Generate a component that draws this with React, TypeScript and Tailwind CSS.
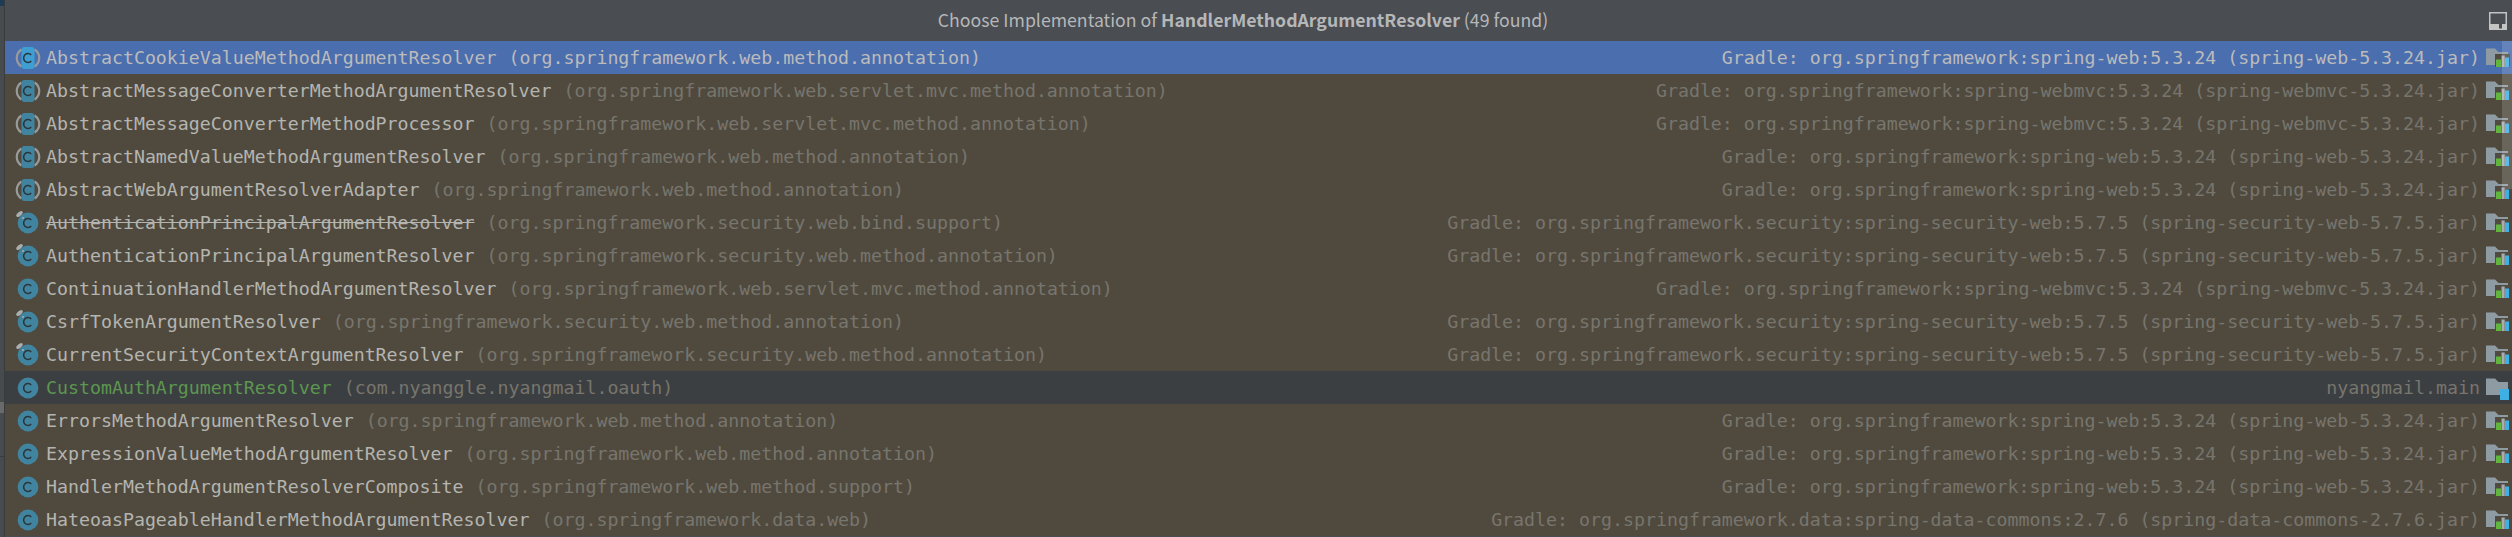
const mono = "font-['DejaVu_Sans_Mono','Liberation_Mono',monospace]";

type Row = {
  name: string;
  pkg: string;
  lib: string;
  kind: "abstract" | "cls" | "lock";
  strike?: boolean;
  selected?: boolean;
  local?: boolean;
};

const web = "Gradle: org.springframework:spring-web:5.3.24 (spring-web-5.3.24.jar)";
const mvc = "Gradle: org.springframework:spring-webmvc:5.3.24 (spring-webmvc-5.3.24.jar)";
const sec = "Gradle: org.springframework.security:spring-security-web:5.7.5 (spring-security-web-5.7.5.jar)";
const data = "Gradle: org.springframework.data:spring-data-commons:2.7.6 (spring-data-commons-2.7.6.jar)";

const rows: Row[] = [
  { name: "AbstractCookieValueMethodArgumentResolver", pkg: "(org.springframework.web.method.annotation)", lib: web, kind: "abstract", selected: true },
  { name: "AbstractMessageConverterMethodArgumentResolver", pkg: "(org.springframework.web.servlet.mvc.method.annotation)", lib: mvc, kind: "abstract" },
  { name: "AbstractMessageConverterMethodProcessor", pkg: "(org.springframework.web.servlet.mvc.method.annotation)", lib: mvc, kind: "abstract" },
  { name: "AbstractNamedValueMethodArgumentResolver", pkg: "(org.springframework.web.method.annotation)", lib: web, kind: "abstract" },
  { name: "AbstractWebArgumentResolverAdapter", pkg: "(org.springframework.web.method.annotation)", lib: web, kind: "abstract" },
  { name: "AuthenticationPrincipalArgumentResolver", pkg: "(org.springframework.security.web.bind.support)", lib: sec, kind: "lock", strike: true },
  { name: "AuthenticationPrincipalArgumentResolver", pkg: "(org.springframework.security.web.method.annotation)", lib: sec, kind: "lock" },
  { name: "ContinuationHandlerMethodArgumentResolver", pkg: "(org.springframework.web.servlet.mvc.method.annotation)", lib: mvc, kind: "cls" },
  { name: "CsrfTokenArgumentResolver", pkg: "(org.springframework.security.web.method.annotation)", lib: sec, kind: "lock" },
  { name: "CurrentSecurityContextArgumentResolver", pkg: "(org.springframework.security.web.method.annotation)", lib: sec, kind: "lock" },
  { name: "CustomAuthArgumentResolver", pkg: "(com.nyanggle.nyangmail.oauth)", lib: "nyangmail.main", kind: "cls", local: true },
  { name: "ErrorsMethodArgumentResolver", pkg: "(org.springframework.web.method.annotation)", lib: web, kind: "cls" },
  { name: "ExpressionValueMethodArgumentResolver", pkg: "(org.springframework.web.method.annotation)", lib: web, kind: "cls" },
  { name: "HandlerMethodArgumentResolverComposite", pkg: "(org.springframework.web.method.support)", lib: web, kind: "cls" },
  { name: "HateoasPageableHandlerMethodArgumentResolver", pkg: "(org.springframework.data.web)", lib: data, kind: "cls" },
];

function ClassIcon({ kind, selected }: { kind: Row["kind"]; selected?: boolean }) {
  const fill = selected ? "#3f9fd2" : "#41849f";
  return (
    <svg width="22" height="24" viewBox="0 0 22 24" className="shrink-0 overflow-visible">
      {kind === "abstract" ? (
        <>
          <path d="M4.5 3.5 A10 10 0 0 0 4.5 20.5" fill="none" stroke="#9a9a9a" strokeWidth="2.2" />
          <path d="M17.5 3.5 A10 10 0 0 1 17.5 20.5" fill="none" stroke="#9a9a9a" strokeWidth="2.2" />
          <rect x="4.5" y="1" width="13" height="22" rx="3" fill={fill} />
        </>
      ) : (
        <circle cx="11" cy="12" r="10.4" fill={fill} />
      )}
      <path d="M14.2 9 A4.3 4.6 0 1 0 14.2 15" fill="none" stroke="#2a3439" strokeWidth="1.5" />
      {kind === "lock" && (
        <>
          <ellipse cx="2.5" cy="3" rx="3.8" ry="2" transform="rotate(-40 2.5 3)" fill="#a9aeb0" />
          <circle cx="6" cy="7" r="1" fill="#a9aeb0" />
        </>
      )}
    </svg>
  );
}

function FolderIcon({ local }: { local?: boolean }) {
  return (
    <svg width="24" height="24" viewBox="0 0 24 24" className="shrink-0">
      <path d="M0 2.5 H9 L12.5 6 H22 V19 H0 Z" fill="#8f9ba3" />
      {local ? (
        <rect x="14" y="13" width="9" height="11" fill="#3fb0e4" />
      ) : (
        <>
          <rect x="9" y="8" width="15" height="13" fill="#4f4b41" />
          <rect x="10" y="13.5" width="5" height="7.5" fill="#62b53d" />
          <rect x="15.5" y="9.5" width="3.2" height="11.5" fill="#a8adb0" />
          <rect x="19" y="11.5" width="4" height="9.5" fill="#3fb0e4" />
        </>
      )}
    </svg>
  );
}

function ResultRow({ row }: { row: Row }) {
  const bg = row.selected ? "bg-[#4b6eaf]" : row.local ? "bg-[#3c3f41]" : "bg-[#504a3e]";
  const nameColor = row.selected ? "text-[#bbbbbb]" : row.local ? "text-[#5c9650]" : "text-[#b4b4b0]";
  const dim = row.selected ? "text-[#bbbbbb]" : "text-[#77756d]";
  return (
    <div className={`${bg} h-[33px] flex items-center pl-[12px] pr-[2px] shrink-0 whitespace-pre`}>
      <ClassIcon kind={row.kind} selected={row.selected} />
      <span className={`ml-[7px] ${nameColor} ${row.strike ? "line-through" : ""}`}>{row.name}</span>
      <span className={`ml-[12px] ${dim}`}>{row.pkg}</span>
      <span className={`ml-auto mr-[6px] ${dim}`}>{row.lib}</span>
      <FolderIcon local={row.local} />
    </div>
  );
}

export default function App() {
  return (
    <div className="w-[2512px] h-[537px] overflow-hidden flex bg-[#4a4d52]">
      <div className="w-[5px] shrink-0 bg-[#484b4e] border-r border-[#393c3f] flex flex-col">
        <div className="h-[6px] bg-[#1d3b57]" />
        <div className="h-[396px]" />
        <div className="h-[11px] bg-[#6a6a6a]" />
        <div className="h-[43px]" />
        <div className="h-[1px] bg-[#393c3f]" />
      </div>
      <div className="flex-1 min-w-0 flex flex-col">
        <div className="h-[41px] shrink-0 flex items-center bg-[#4a4d52]">
          <div className="flex-1 text-center pr-[8px] pb-[2px] text-[17.7px] text-[#b5b7b9] font-['Noto_Sans_CJK_KR','Noto_Sans',sans-serif]">
            Choose Implementation of <b className="font-bold">HandlerMethodArgumentResolver</b> (49 found)
          </div>
          <svg width="18" height="18" viewBox="0 0 18 18" className="mr-[5px] shrink-0">
            <rect x="0.75" y="0.75" width="16.5" height="16.5" fill="none" stroke="#c4c4c4" strokeWidth="1.5" />
            <path d="M1 12 H10 V17 H1 Z M13 12 H17 V17 H13 Z" fill="#c4c4c4" />
          </svg>
        </div>
        <div className="relative flex-1 min-h-0">
          <div className={`flex flex-col text-[18.25px] ${mono}`}>
            {rows.map((r, i) => (
              <ResultRow key={i} row={r} />
            ))}
          </div>
          {/* scrollbar thumb sits over the rows */}
          <div className="absolute top-0 right-0 w-[10px] h-[148px] bg-white/15" />
        </div>
      </div>
    </div>
  );
}
